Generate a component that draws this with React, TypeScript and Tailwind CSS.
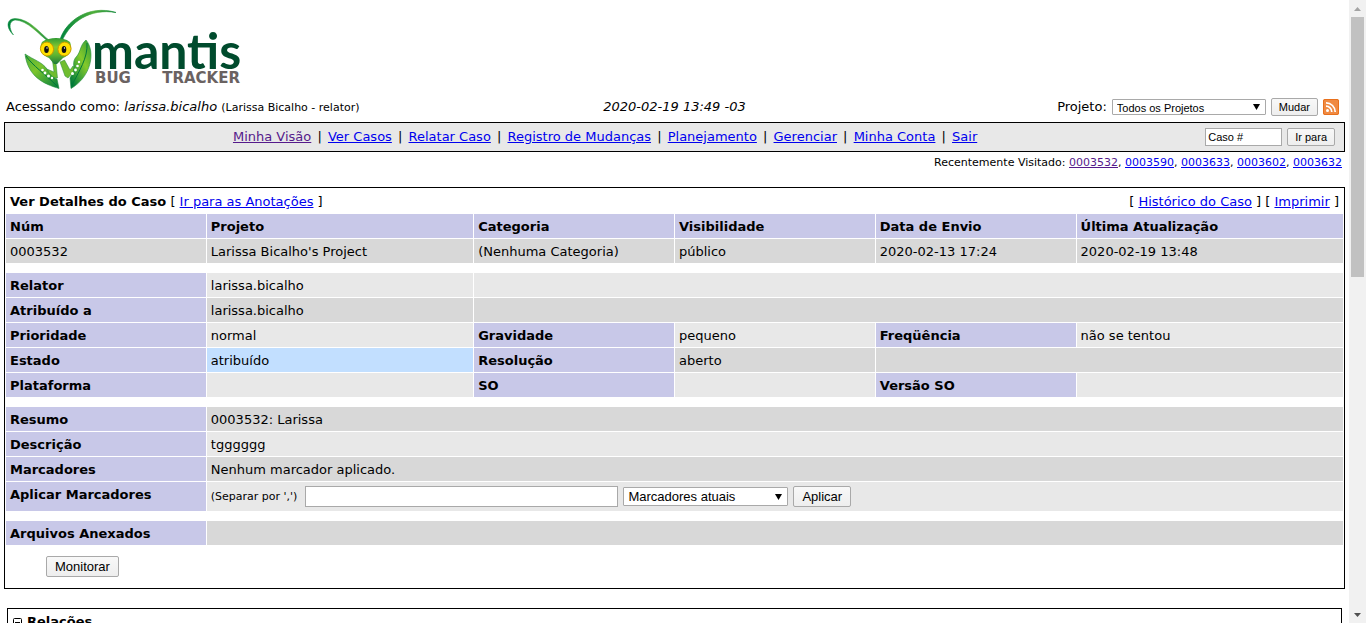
import React from 'react';

const link = 'underline text-[#0000ee]';
const visited = 'underline text-[#551a8b]';
const button =
  'border border-[#a9a9a9] rounded-[2px] bg-linear-to-b from-[#f8f8f8] to-[#eeeeee] text-black whitespace-nowrap';

function Logo() {
  return (
    <a href="#" className="block w-fit" aria-label="Mantis Bug Tracker">
      <svg width="244" height="92" viewBox="4 0 244 92" className="block">
        <defs>
          <linearGradient id="leafLeft" x1="0" y1="0" x2="1" y2="1">
            <stop offset="0" stopColor="#4fae3a" />
            <stop offset="0.4" stopColor="#7cc52c" />
            <stop offset="0.7" stopColor="#3aa037" />
            <stop offset="1" stopColor="#007a3a" />
          </linearGradient>
          <linearGradient id="leafRight" x1="1" y1="0" x2="0.2" y2="1">
            <stop offset="0" stopColor="#2d9a3a" />
            <stop offset="0.45" stopColor="#84c92b" />
            <stop offset="0.75" stopColor="#3aa037" />
            <stop offset="1" stopColor="#007a3a" />
          </linearGradient>
          <linearGradient id="head" x1="0" y1="0" x2="0" y2="1">
            <stop offset="0" stopColor="#2f9b35" />
            <stop offset="0.35" stopColor="#86c92f" />
            <stop offset="0.65" stopColor="#5fb52f" />
            <stop offset="1" stopColor="#1d7a3b" />
          </linearGradient>
          <linearGradient id="feeler" x1="0" y1="0" x2="1" y2="0">
            <stop offset="0" stopColor="#00843d" />
            <stop offset="0.6" stopColor="#4fae3a" />
            <stop offset="1" stopColor="#178a3e" />
          </linearGradient>
        </defs>
        <path d="M51 41.5C40 34 31 19 15 18.5C6 19 6 28 13.5 35C8.500 28 9 21 15 20C28 20.500 38 34 49.500 42.500Z" fill="url(#feeler)" stroke="url(#feeler)" strokeWidth="0.5" />
        <path d="M60 40C65 22 88 4 116 12.500C90 8 70 22 62 41Z" fill="url(#feeler)" stroke="url(#feeler)" strokeWidth="0.7" />
        <path d="M52.500 61L56 63L57.500 78L52 77.500L41 68L48 69.500L54 72Z" fill="#6fbd2f" stroke="#258b38" strokeWidth="0.5" />
        <path d="M25 54C34 60 42 62 47 69C49 74 52 77 57 79L59 88.500C44 84 28 77 25 54Z" fill="url(#leafLeft)" stroke="#1d8a3b" strokeWidth="0.6" />
        <path d="M26 56C33 66 44 73 57 86" fill="none" stroke="#00783a" strokeWidth="1" />
        <path d="M60 62L64.500 60L70 70L73 66L75 70L68 78L65 76Z" fill="#6fbd2f" stroke="#258b38" strokeWidth="0.5" />
        <path d="M86 40C96 52 91 77 71 88.500L70 78C71 75 74 73 74 68C73 62 74 59 77 56C81 51 80 45 86 40Z" fill="url(#leafRight)" stroke="#1d8a3b" strokeWidth="0.6" />
        <path d="M87 43C88 58 79 71 71.500 86" fill="none" stroke="#00783a" strokeWidth="1" />
        <g fill="#fff">
          <circle cx="42.500" cy="70" r="1.300" />
          <circle cx="45" cy="73" r="1.400" />
          <circle cx="48.500" cy="76" r="1.500" />
          <circle cx="52" cy="78" r="1.200" />
          <circle cx="79" cy="62" r="1.200" />
          <circle cx="77.500" cy="66" r="1.300" />
          <circle cx="75.500" cy="70" r="1.400" />
          <circle cx="72.500" cy="73.500" r="1.500" />
        </g>
        <path d="M42 42C46 39 51 38 56 38C61 38 66 39 70 42C73 49 69 56 63 58L57 64L54 64L49 58C43 56 38 49 42 42Z" fill="url(#head)" />
        <ellipse cx="47" cy="49" rx="6.500" ry="7" fill="#ffe000" stroke="#c59b00" strokeWidth="0.9" transform="rotate(-20 47 49)" />
        <ellipse cx="64.500" cy="49" rx="6.500" ry="7" fill="#ffe000" stroke="#c59b00" strokeWidth="0.9" transform="rotate(20 64.500 49)" />
        <ellipse cx="46.500" cy="49.500" rx="2.300" ry="3.500" fill="#111" />
        <ellipse cx="64" cy="49.500" rx="2.300" ry="3.500" fill="#111" />
        <circle cx="47" cy="48" r="0.700" fill="#fff" />
        <circle cx="64.500" cy="48" r="0.700" fill="#fff" />
        <text x="92" y="69" fill="#004b2d" className="font-['Lato'] text-[50px] font-bold">mantis</text>
        <text x="95" y="83" fill="#6a6261" className="font-['DejaVu_Sans'] text-[15px] font-bold">BUG</text>
        <text x="240" y="83" textAnchor="end" fill="#6a6261" className="font-['DejaVu_Sans'] text-[15px] font-bold">TRACKER</text>
      </svg>
    </a>
  );
}

function SelectBox({ label, option, className }: { label: string; option: string; className: string }) {
  return (
    <span className="relative inline-flex">
      <select
        aria-label={label}
        className={`appearance-none rounded-[1px] border border-[#a9a9a9] bg-white px-1 font-['Liberation_Sans',sans-serif] text-black ${className}`}
      >
        <option>{option}</option>
      </select>
      <svg width="7" height="6" viewBox="0 0 7 6" className="pointer-events-none absolute top-1/2 right-[6px] -translate-y-1/2">
        <path d="M0 0H7L3.5 6Z" fill="#000" />
      </svg>
    </span>
  );
}

const menu = ['Minha Visão', 'Ver Casos', 'Relatar Caso', 'Registro de Mudanças', 'Planejamento', 'Gerenciar', 'Minha Conta', 'Sair'];
const recent = ['0003532', '0003590', '0003633', '0003602', '0003632'];

const light = 'bg-[#e8e8e8]';
const dark = 'bg-[#d8d8d8]';

function Label({ children }: { children: React.ReactNode }) {
  return <th className="bg-[#c8c8e8] px-1 pt-[5px] pb-[3px] text-left align-top font-bold">{children}</th>;
}

function Cell({ tone, span, children }: { tone: string; span?: number; children?: React.ReactNode }) {
  return <td colSpan={span} className={`h-6 px-1 pt-[5px] pb-[3px] align-top ${tone}`}>{children}</td>;
}

function Spacer() {
  return (
    <tr>
      <td colSpan={6} className="h-2 p-0" />
    </tr>
  );
}

function Details() {
  return (
    <table className="w-full table-fixed border-separate border-spacing-px border border-black">
      <colgroup>
        <col className="w-[15%]" />
        <col className="w-[20%]" />
        <col className="w-[15%]" />
        <col className="w-[15%]" />
        <col className="w-[15%]" />
        <col className="w-[20%]" />
      </colgroup>
      <tbody>
        <tr>
          <td colSpan={3} className="px-1 pt-[5px] pb-[3px]">
            <b>Ver Detalhes do Caso</b> [ <a href="#notas" className={link}>Ir para as Anotações</a> ]
          </td>
          <td colSpan={3} className="px-1 pt-[5px] pb-[3px] text-right">
            [ <a href="#historico" className={link}>Histórico do Caso</a> ] [ <a href="#imprimir" className={link}>Imprimir</a> ]
          </td>
        </tr>
        <tr>
          <Label>Núm</Label>
          <Label>Projeto</Label>
          <Label>Categoria</Label>
          <Label>Visibilidade</Label>
          <Label>Data de Envio</Label>
          <Label>Última Atualização</Label>
        </tr>
        <tr>
          <Cell tone={dark}>0003532</Cell>
          <Cell tone={dark}>Larissa Bicalho's Project</Cell>
          <Cell tone={dark}>(Nenhuma Categoria)</Cell>
          <Cell tone={dark}>público</Cell>
          <Cell tone={dark}>2020-02-13 17:24</Cell>
          <Cell tone={dark}>2020-02-19 13:48</Cell>
        </tr>
        <Spacer />
        <tr>
          <Label>Relator</Label>
          <Cell tone={light}>larissa.bicalho</Cell>
          <Cell tone={light} span={4} />
        </tr>
        <tr>
          <Label>Atribuído a</Label>
          <Cell tone={dark}>larissa.bicalho</Cell>
          <Cell tone={dark} span={4} />
        </tr>
        <tr>
          <Label>Prioridade</Label>
          <Cell tone={light}>normal</Cell>
          <Label>Gravidade</Label>
          <Cell tone={light}>pequeno</Cell>
          <Label>Freqüência</Label>
          <Cell tone={light}>não se tentou</Cell>
        </tr>
        <tr>
          <Label>Estado</Label>
          <Cell tone="bg-[#c2dfff]">atribuído</Cell>
          <Label>Resolução</Label>
          <Cell tone={dark}>aberto</Cell>
          <Cell tone={dark} span={2} />
        </tr>
        <tr>
          <Label>Plataforma</Label>
          <Cell tone={light} />
          <Label>SO</Label>
          <Cell tone={light} />
          <Label>Versão SO</Label>
          <Cell tone={light} />
        </tr>
        <Spacer />
        <tr>
          <Label>Resumo</Label>
          <Cell tone={dark} span={5}>0003532: Larissa</Cell>
        </tr>
        <tr>
          <Label>Descrição</Label>
          <Cell tone={light} span={5}>tgggggg</Cell>
        </tr>
        <tr>
          <Label>Marcadores</Label>
          <Cell tone={dark} span={5}>Nenhum marcador aplicado.</Cell>
        </tr>
        <tr>
          <Label>Aplicar Marcadores</Label>
          <td colSpan={5} className={`p-1 align-top ${light}`}>
            <form className="flex items-center gap-[5px]">
              <label htmlFor="tags" className="mr-[3px] text-[11px]">(Separar por ',')</label>
              <input id="tags" type="text" className="h-[21px] w-[313px] border border-[#a9a9a9] bg-white px-1" />
              <SelectBox label="Marcadores" option="Marcadores atuais" className="h-[19px] w-[165px] text-[13px]" />
              <button type="button" className={`${button} h-[21px] px-2 font-['Liberation_Sans',sans-serif] text-[13px] leading-[17px]`}>Aplicar</button>
            </form>
          </td>
        </tr>
        <Spacer />
        <tr>
          <Label>Arquivos Anexados</Label>
          <Cell tone={dark} span={5} />
        </tr>
        <tr>
          <td colSpan={6} className="px-10 py-[10px]">
            <button type="button" className={`${button} block h-[21px] px-2 font-['Liberation_Sans',sans-serif] text-[13px] leading-[17px]`}>Monitorar</button>
          </td>
        </tr>
      </tbody>
    </table>
  );
}

export default function App() {
  return (
    <div className="flex h-screen overflow-hidden bg-white font-['DejaVu_Sans',Verdana,sans-serif] text-[13px] leading-4 text-black">
      <main className="min-w-0 flex-1 overflow-hidden px-1">
        <Logo />

        <header className="grid h-[30px] grid-cols-3 items-center px-[2px]">
          <div className="whitespace-nowrap">
            Acessando como: <i>larissa.bicalho</i> <span className="text-[11px]">(Larissa Bicalho - relator)</span>
          </div>
          <div className="text-center italic">2020-02-19 13:49 -03</div>
          <form className="flex items-center justify-end gap-[5px] pr-1">
            <span>Projeto:</span>
            <SelectBox label="Projeto" option="Todos os Projetos" className="h-4 w-[154px] text-[11px]" />
            <button type="button" className={`${button} h-[18px] px-[7px] font-['Liberation_Sans',sans-serif] text-[11px] leading-[14px]`}>Mudar</button>
            <a href="#rss" aria-label="RSS">
              <svg width="16" height="16" viewBox="0 0 16 16" className="block">
                <rect width="16" height="16" rx="2" fill="#f08a42" />
                <rect x="0.5" y="0.5" width="15" height="15" rx="1.5" fill="none" stroke="#e8701c" />
                <circle cx="4.5" cy="11.5" r="1.5" fill="#fff" />
                <path d="M3 7.2A5.8 5.8 0 0 1 8.8 13M3 3.8A9.2 9.2 0 0 1 12.2 13" fill="none" stroke="#fff" strokeWidth="1.7" />
              </svg>
            </a>
          </form>
        </header>

        <nav className="flex h-[30px] items-center border border-black bg-[#e8e8e8] pr-[9px]">
          <div className="flex-1 text-center whitespace-nowrap">
            {menu.map((item, i) => (
              <React.Fragment key={item}>
                {i > 0 && <span className="px-[2px]"> | </span>}
                <a href="#" className={i === 0 ? visited : link}>{item}</a>
              </React.Fragment>
            ))}
          </div>
          <form className="flex items-center gap-[5px]">
            <input
              aria-label="Caso #"
              type="text"
              defaultValue="Caso #"
              className="h-[18px] w-[77px] border border-[#a9a9a9] bg-white px-[2px] font-['Liberation_Sans',sans-serif] text-[11px]"
            />
            <button type="button" className={`${button} h-[18px] px-[7px] font-['Liberation_Sans',sans-serif] text-[11px] leading-[14px]`}>Ir para</button>
          </form>
        </nav>

        <div className="h-5 pt-[3px] pr-[3px] text-right text-[11px]">
          Recentemente Visitado:{' '}
          {recent.map((id, i) => (
            <React.Fragment key={id}>
              {i > 0 && ', '}
              <a href="#" className={i === 0 ? visited : link}>{id}</a>
            </React.Fragment>
          ))}
        </div>

        <div className="mt-[15px]">
          <Details />
        </div>

        <section className="mx-[3px] mt-[19px] border border-black p-[5px]">
          <h2 className="flex items-center gap-[5px] font-bold">
            <svg width="9" height="9" viewBox="0 0 9 9">
              <rect x="0.5" y="0.5" width="8" height="8" rx="1" fill="#fff" stroke="#000" />
              <path d="M2 4.5H7" stroke="#000" />
            </svg>
            Relações
          </h2>
        </section>
      </main>

      <div aria-hidden="true" className="flex w-[17px] flex-col items-center bg-[#f1f1f1]">
        <div className="flex h-[17px] items-center">
          <svg width="7" height="4" viewBox="0 0 7 4"><path d="M0 4L3.5 0L7 4Z" fill="#a3a3a3" /></svg>
        </div>
        <div className="h-[260px] w-[13px] bg-[#c1c1c1]" />
        <div className="mt-auto flex h-[17px] items-center">
          <svg width="7" height="4" viewBox="0 0 7 4"><path d="M0 0L3.5 4L7 0Z" fill="#505050" /></svg>
        </div>
      </div>
    </div>
  );
}
